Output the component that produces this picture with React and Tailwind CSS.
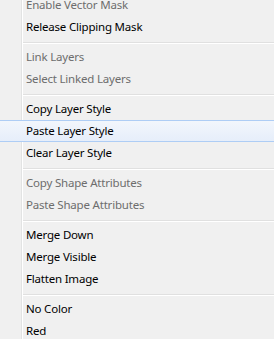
import React from "react";

const items = [
  { label: "Enable Vector Mask", disabled: true },
  { label: "Release Clipping Mask" },
  { sep: true },
  { label: "Link Layers", disabled: true },
  { label: "Select Linked Layers", disabled: true },
  { sep: true },
  { label: "Copy Layer Style" },
  { label: "Paste Layer Style", hover: true },
  { label: "Clear Layer Style" },
  { sep: true },
  { label: "Copy Shape Attributes", disabled: true },
  { label: "Paste Shape Attributes", disabled: true },
  { sep: true },
  { label: "Merge Down" },
  { label: "Merge Visible" },
  { label: "Flatten Image" },
  { sep: true },
  { label: "No Color" },
  { label: "Red" },
];

function MenuItem({ item }) {
  if (item.sep) {
    return (
      <div className="h-[8px] pl-[23px] pt-[4px]">
        <div className="h-px bg-[#e0e0e0]" />
        <div className="h-px bg-white" />
      </div>
    );
  }
  return (
    <div
      className={
        "relative h-[22px] flex items-center pl-[26px] text-[11.5px] tracking-[-0.2px] leading-none " +
        (item.disabled ? "text-[#6d6d6d]" : "text-black") +
        (item.hover
          ? " border-y border-[#aecdf5] bg-gradient-to-b from-[#f2f6fc] to-[#e6eefa]"
          : "")
      }
    >
      {item.label}
    </div>
  );
}

export default function App() {
  return (
    <div
      className="relative w-[274px] h-[339px] overflow-hidden bg-[#f0f0f0]"
      style={{ fontFamily: '"Noto Sans", "Open Sans", sans-serif' }}
    >
      {/* gutter line */}
      <div className="absolute left-[21px] top-0 bottom-0 w-[2px] flex">
        <div className="w-px bg-[#e2e3e3]" />
        <div className="w-px bg-white" />
      </div>
      <div className="relative -mt-[6px]">
        {items.map((item, i) => (
          <MenuItem key={i} item={item} />
        ))}
      </div>
    </div>
  );
}
